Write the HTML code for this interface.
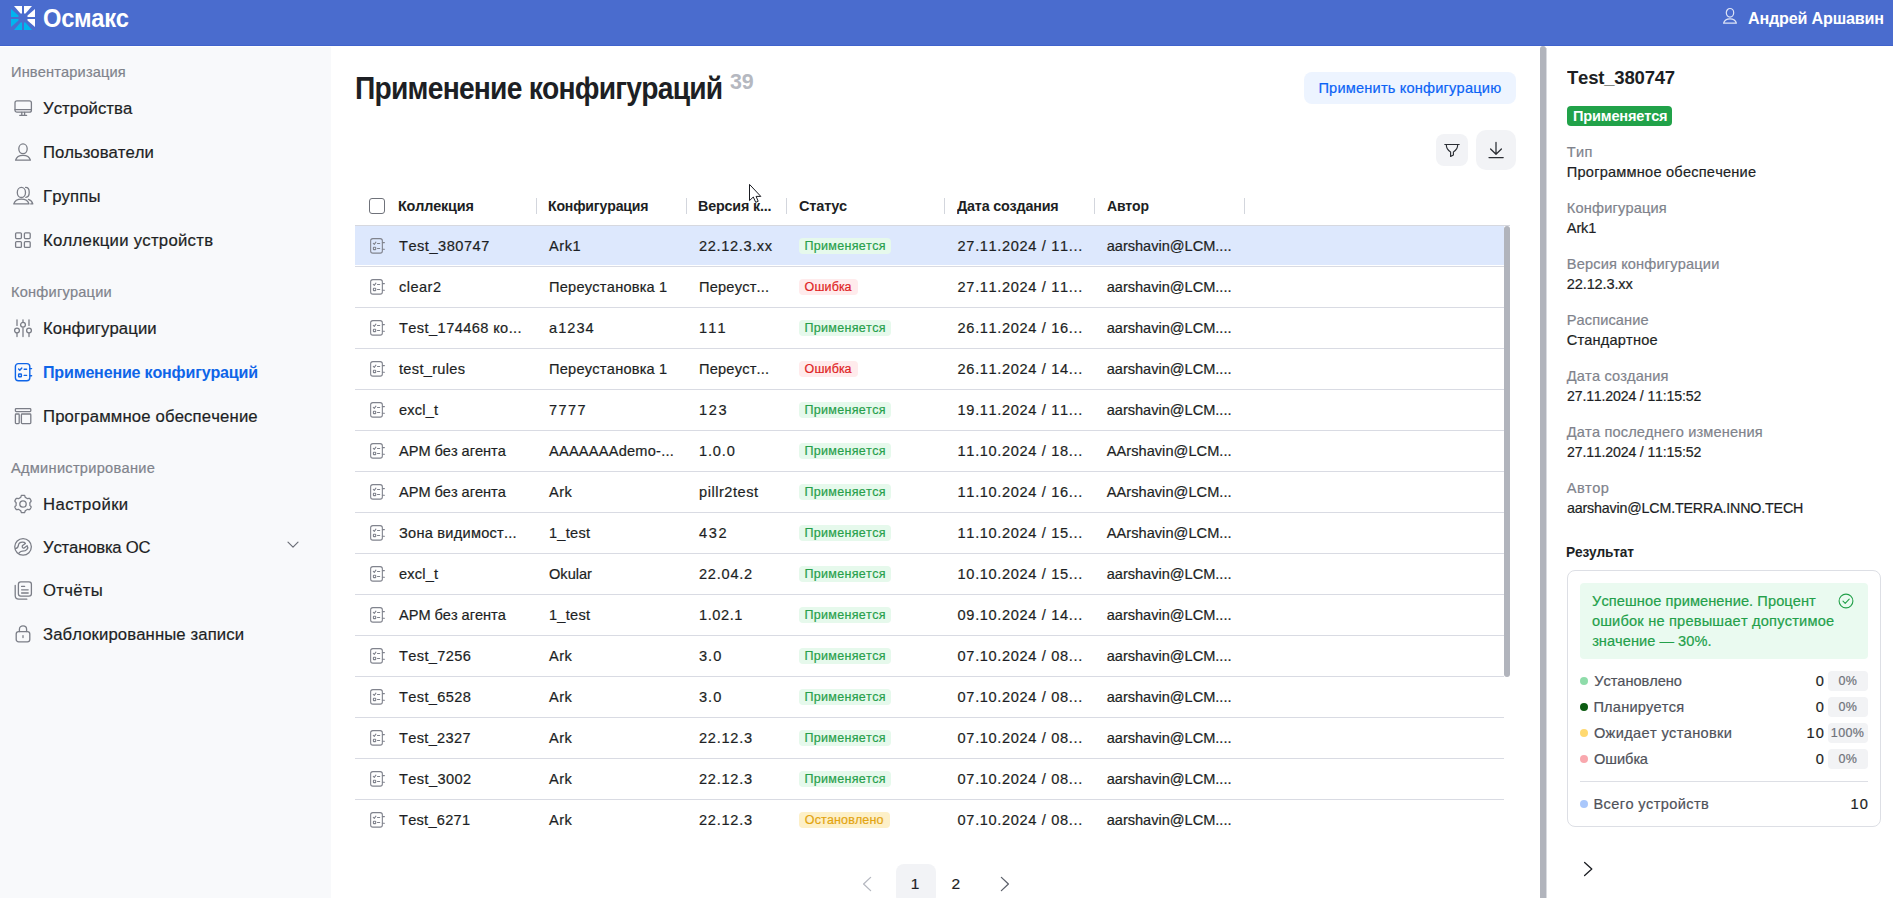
<!DOCTYPE html>
<html lang="ru"><head><meta charset="utf-8"><title>Осмакс — Применение конфигураций</title>
<style>
html,body{margin:0;padding:0;}
body{width:1893px;height:898px;position:relative;overflow:hidden;background:#fff;font-family:'Liberation Sans', sans-serif;font-kerning:none;}
.b{position:absolute;}
.t{position:absolute;white-space:pre;line-height:1;transform-origin:0 0;-webkit-text-stroke:0.2px;}
.t.b{font-weight:700;-webkit-text-stroke:0;}
svg{position:absolute;overflow:visible;}
</style></head><body>
<div class="b" style="left:0px;top:0px;width:1893px;height:46px;background:#4a6cce;"></div>
<div class="b" style="left:0px;top:45px;width:1893px;height:1px;background:#4063cc;"></div>
<div class="b" style="left:0px;top:47px;width:331px;height:851px;background:#f8f9fb;"></div>
<div class="b" style="left:1540px;top:46px;width:6px;height:852px;background:#b1b4bc;border-radius:3px 3px 0 0px;"></div>
<div class="b" style="left:1546px;top:48px;width:1px;height:850px;background:#d9dbe0;"></div>
<svg style="left:11px;top:6px" width="24" height="24" viewBox="0 0 24 24">
<g fill="#fff"><path d="M3 0H11V7.5H9.5Z"/><path d="M13 0H21L14.5 7.5H13Z"/><path d="M24 3V10.9H16.5V9.4Z"/><path d="M24 21V13.1H16.5V14.6Z"/></g>
<g fill="#00b4ef"><path d="M13 24V16.5H14.5L21 24Z"/><path d="M11 24V16.5H9.5L3 24Z"/><path d="M0 21V13.1H7.5V14.6Z"/><path d="M0 3V10.9H7.5V9.4Z"/></g></svg>
<svg style="left:13px;top:98px" width="20" height="20" viewBox="0 0 20 20" fill="none" stroke="#7b7e87" stroke-width="1.3" stroke-linecap="round" stroke-linejoin="round"><rect x="2" y="2.8" width="16.4" height="11.4" rx="2"/><path d="M2 11.6H18.4M8.8 14.4V17.3M11.6 14.4V17.3M6.8 17.4H13.6"/></svg>
<svg style="left:13px;top:142px" width="20" height="20" viewBox="0 0 20 20" fill="none" stroke="#7b7e87" stroke-width="1.3" stroke-linecap="round" stroke-linejoin="round"><ellipse cx="10" cy="6.8" rx="4.2" ry="4.9"/><path d="M2.6 18.2C3.6 14.6 6 13.4 10 13.4S16.4 14.6 17.4 18.2Z"/></svg>
<svg style="left:13px;top:186px" width="20" height="20" viewBox="0 0 20 20" fill="none" stroke="#7b7e87" stroke-width="1.3" stroke-linecap="round" stroke-linejoin="round"><ellipse cx="8.4" cy="6.4" rx="4.1" ry="5.1"/><path d="M0.8 17.9C1.8 14.4 4.4 13.1 8.4 13.1S15 14.4 16 17.9Z"/><path d="M12.6 1.4C17.4 1.4 17.4 11 12.8 11.3M15.4 13.4C17.8 14 19.2 15.6 19.8 17.9H17.8"/></svg>
<svg style="left:13px;top:230px" width="20" height="20" viewBox="0 0 20 20" fill="none" stroke="#7b7e87" stroke-width="1.3" stroke-linecap="round" stroke-linejoin="round"><rect x="2.6" y="2.8" width="5.8" height="5.8" rx="1"/><rect x="11.4" y="2.8" width="5.8" height="5.8" rx="1"/><rect x="2.6" y="11.6" width="5.8" height="5.8" rx="1"/><rect x="11.4" y="11.6" width="5.8" height="5.8" rx="1"/></svg>
<svg style="left:13px;top:318px" width="20" height="20" viewBox="0 0 20 20" fill="none" stroke="#7b7e87" stroke-width="1.3" stroke-linecap="round" stroke-linejoin="round"><path d="M4 1.8V7.4M4 15.6V18.6M10 1.8V3.6M10 9.8V18.6M16 1.8V7.4M16 15.6V18.6"/><circle cx="4" cy="12.6" r="2.4"/><circle cx="10" cy="6.8" r="2.4"/><circle cx="16" cy="12.6" r="2.4"/></svg>
<svg style="left:13px;top:362px" width="20" height="20" viewBox="0 0 20 20" fill="none" stroke="#0f65e8" stroke-width="1.4" stroke-linecap="round" stroke-linejoin="round"><rect x="2.4" y="1.6" width="14.4" height="17.2" rx="3"/><path d="M16.8 6.6H18.6M16.8 13.8H18.6"/><path d="M5.6 7L6.8 8.2L8.8 6M11.2 7.2H13.6M11.2 13.4H13.6"/><rect x="5.6" y="12" width="2.8" height="2.8" rx="0.5"/></svg>
<svg style="left:13px;top:406px" width="20" height="20" viewBox="0 0 20 20" fill="none" stroke="#7b7e87" stroke-width="1.3" stroke-linecap="round" stroke-linejoin="round"><rect x="2.4" y="2.6" width="15.4" height="3" rx="0.8"/><rect x="2.4" y="8" width="3.8" height="9.6" rx="0.8"/><rect x="8.4" y="8" width="9.4" height="9.6" rx="0.8"/></svg>
<svg style="left:13px;top:494px" width="20" height="20" viewBox="0 0 20 20" fill="none" stroke="#7b7e87" stroke-width="1.3" stroke-linecap="round" stroke-linejoin="round"><path d="M10.00 1.30L10.38 1.31L10.76 1.33L11.14 1.37L11.51 1.43L11.80 1.88L12.02 2.47L12.19 3.05L12.36 3.52L12.64 3.63L12.92 3.75L13.19 3.88L13.45 4.02L13.71 4.18L13.96 4.35L14.20 4.53L14.44 4.71L14.92 4.63L15.52 4.48L16.13 4.38L16.66 4.41L16.90 4.70L17.13 5.01L17.34 5.33L17.53 5.65L17.72 5.98L17.88 6.32L18.04 6.67L18.18 7.02L17.93 7.50L17.53 7.98L17.11 8.42L16.80 8.80L16.84 9.10L16.87 9.40L16.89 9.70L16.90 10.00L16.89 10.30L16.87 10.60L16.84 10.90L16.80 11.20L17.11 11.58L17.53 12.02L17.93 12.50L18.18 12.98L18.04 13.33L17.88 13.68L17.72 14.02L17.53 14.35L17.34 14.67L17.13 14.99L16.90 15.30L16.66 15.59L16.13 15.62L15.52 15.52L14.92 15.37L14.44 15.29L14.20 15.47L13.96 15.65L13.71 15.82L13.45 15.98L13.19 16.12L12.92 16.25L12.64 16.37L12.36 16.48L12.19 16.95L12.02 17.53L11.80 18.12L11.51 18.57L11.14 18.63L10.76 18.67L10.38 18.69L10.00 18.70L9.62 18.69L9.24 18.67L8.86 18.63L8.49 18.57L8.20 18.12L7.98 17.53L7.81 16.95L7.64 16.48L7.36 16.37L7.08 16.25L6.81 16.12L6.55 15.98L6.29 15.82L6.04 15.65L5.80 15.47L5.56 15.29L5.08 15.37L4.48 15.52L3.87 15.62L3.34 15.59L3.10 15.30L2.87 14.99L2.66 14.67L2.47 14.35L2.28 14.02L2.12 13.68L1.96 13.33L1.82 12.98L2.07 12.50L2.47 12.02L2.89 11.58L3.20 11.20L3.16 10.90L3.13 10.60L3.11 10.30L3.10 10.00L3.11 9.70L3.13 9.40L3.16 9.10L3.20 8.80L2.89 8.42L2.47 7.98L2.07 7.50L1.82 7.02L1.96 6.67L2.12 6.32L2.28 5.98L2.47 5.65L2.66 5.33L2.87 5.01L3.10 4.70L3.34 4.41L3.87 4.38L4.48 4.48L5.08 4.63L5.56 4.71L5.80 4.53L6.04 4.35L6.29 4.18L6.55 4.02L6.81 3.88L7.08 3.75L7.36 3.63L7.64 3.52L7.81 3.05L7.98 2.47L8.20 1.88L8.49 1.43L8.86 1.37L9.24 1.33L9.62 1.31L10.00 1.30Z"/><circle cx="10" cy="10" r="3.2"/></svg>
<svg style="left:13px;top:537px" width="20" height="20" viewBox="0 0 20 20" fill="none" stroke="#7b7e87" stroke-width="1.3" stroke-linecap="round" stroke-linejoin="round"><circle cx="10.05" cy="9.85" r="8.3"/><path d="M2.5 11.6C4 11.2 5.2 10.2 5.4 8.4C5.6 6.6 7 5.4 9.4 5.2C10.8 5.1 11.8 5.6 12.4 6.4L9.6 8.5C9 9.2 9.2 10.4 9.8 10.8C10.4 11.3 11 11.2 11.4 10.8L14.1 8.7C14.9 9.8 14.8 11.4 14 12.4C13 13.8 11.2 14.2 9.4 14.2C8 14.2 7 15 6.2 15.8"/></svg>
<svg style="left:13px;top:580px" width="20" height="20" viewBox="0 0 20 20" fill="none" stroke="#7b7e87" stroke-width="1.3" stroke-linecap="round" stroke-linejoin="round"><rect x="5.4" y="1.8" width="13" height="14.4" rx="2.4"/><path d="M8.6 6.4H11.6M8.6 9.8H15.2M8.6 13H15.2"/><path d="M2.2 5.4V15.6C2.2 17.8 3.6 19.2 5.8 19.2H13.8"/></svg>
<svg style="left:13px;top:624px" width="20" height="20" viewBox="0 0 20 20" fill="none" stroke="#7b7e87" stroke-width="1.3" stroke-linecap="round" stroke-linejoin="round"><rect x="3.2" y="7.6" width="13.6" height="10.2" rx="2.4"/><path d="M6.4 7.6V5.4C6.4 0.8 13.6 0.8 13.6 5.4V7.6M10 11.6V13.6"/></svg>
<svg style="left:286px;top:538px" width="14" height="14" viewBox="0 0 14 14" fill="none" stroke="#6b6e77" stroke-width="1.2" stroke-linecap="round" stroke-linejoin="round"><path d="M2 4.2L7 9.2L12 4.2"/></svg>
<div class="b" style="left:1304px;top:72px;width:212px;height:32px;background:#edf4ff;border-radius:8px;"></div>
<div class="b" style="left:1436px;top:134px;width:32px;height:32px;background:#f2f3f6;border-radius:8px;"></div>
<div class="b" style="left:1476px;top:130px;width:40px;height:40px;background:#f2f3f6;border-radius:10px;"></div>
<svg style="left:1442px;top:140px" width="20" height="20" viewBox="0 0 20 20" fill="none" stroke="#2a2d33" stroke-width="1.15" stroke-linecap="round" stroke-linejoin="round"><path d="M2.8 4.5H17.2M4.3 4.6C4.3 8.8 6.4 10.8 8.6 11.9V16.5L11.4 15V11.9C13.6 10.8 15.7 8.8 15.7 4.6"/></svg>
<svg style="left:1486px;top:140px" width="20" height="20" viewBox="0 0 20 20" fill="none" stroke="#2a2d33" stroke-width="1.25" stroke-linecap="round" stroke-linejoin="round"><path d="M10 2.4V14M4.6 9L10 14.3L15.4 9M3 17.5H17.2"/></svg>
<div class="b" style="left:369px;top:198px;width:16px;height:16px;background:#fff;border-radius:3px;border:1px solid #6f727a;box-sizing:border-box;"></div>
<div class="b" style="left:536px;top:198px;width:1px;height:16px;background:#d3d6dd;"></div>
<div class="b" style="left:686px;top:198px;width:1px;height:16px;background:#d3d6dd;"></div>
<div class="b" style="left:786px;top:198px;width:1px;height:16px;background:#d3d6dd;"></div>
<div class="b" style="left:944px;top:198px;width:1px;height:16px;background:#d3d6dd;"></div>
<div class="b" style="left:1094px;top:198px;width:1px;height:16px;background:#d3d6dd;"></div>
<div class="b" style="left:1244px;top:198px;width:1px;height:16px;background:#d3d6dd;"></div>
<div class="b" style="left:355px;top:225px;width:1155px;height:1px;background:#d6d8df;"></div>
<div class="b" style="left:355px;top:226px;width:1149px;height:39px;background:#dde8fd;"></div>
<div class="b" style="left:355px;top:266px;width:1149px;height:1px;background:#d9dbe3;"></div>
<div class="b" style="left:355px;top:307px;width:1149px;height:1px;background:#d9dbe3;"></div>
<div class="b" style="left:355px;top:348px;width:1149px;height:1px;background:#d9dbe3;"></div>
<div class="b" style="left:355px;top:389px;width:1149px;height:1px;background:#d9dbe3;"></div>
<div class="b" style="left:355px;top:430px;width:1149px;height:1px;background:#d9dbe3;"></div>
<div class="b" style="left:355px;top:471px;width:1149px;height:1px;background:#d9dbe3;"></div>
<div class="b" style="left:355px;top:512px;width:1149px;height:1px;background:#d9dbe3;"></div>
<div class="b" style="left:355px;top:553px;width:1149px;height:1px;background:#d9dbe3;"></div>
<div class="b" style="left:355px;top:594px;width:1149px;height:1px;background:#d9dbe3;"></div>
<div class="b" style="left:355px;top:635px;width:1149px;height:1px;background:#d9dbe3;"></div>
<div class="b" style="left:355px;top:676px;width:1149px;height:1px;background:#d9dbe3;"></div>
<div class="b" style="left:355px;top:717px;width:1149px;height:1px;background:#d9dbe3;"></div>
<div class="b" style="left:355px;top:758px;width:1149px;height:1px;background:#d9dbe3;"></div>
<div class="b" style="left:355px;top:799px;width:1149px;height:1px;background:#d9dbe3;"></div>
<div class="b" style="left:1504px;top:226px;width:6px;height:451px;background:#b1b4bc;border-radius:3px;"></div>
<svg style="left:369px;top:238px" width="16" height="16" viewBox="0 0 16 16" fill="none" stroke="#80838d" stroke-width="1.1" stroke-linecap="round" stroke-linejoin="round"><rect x="1.65" y="0.65" width="11.7" height="14.5" rx="2.2"/><path d="M13.4 4.6H15.4M13.4 11.3H15.4"/><path d="M4.3 5.3L5.3 6.3L6.9 4.2M8.5 5.5H10.7M8.5 10.5H10.7"/><rect x="4.4" y="9.3" width="2.3" height="2.3" rx="0.4"/></svg>
<div class="b" style="left:799px;top:238px;width:92px;height:16px;background:#e6f9ec;border-radius:4px;"></div>
<svg style="left:369px;top:279px" width="16" height="16" viewBox="0 0 16 16" fill="none" stroke="#80838d" stroke-width="1.1" stroke-linecap="round" stroke-linejoin="round"><rect x="1.65" y="0.65" width="11.7" height="14.5" rx="2.2"/><path d="M13.4 4.6H15.4M13.4 11.3H15.4"/><path d="M4.3 5.3L5.3 6.3L6.9 4.2M8.5 5.5H10.7M8.5 10.5H10.7"/><rect x="4.4" y="9.3" width="2.3" height="2.3" rx="0.4"/></svg>
<div class="b" style="left:799px;top:279px;width:59px;height:16px;background:#ffebec;border-radius:4px;"></div>
<svg style="left:369px;top:320px" width="16" height="16" viewBox="0 0 16 16" fill="none" stroke="#80838d" stroke-width="1.1" stroke-linecap="round" stroke-linejoin="round"><rect x="1.65" y="0.65" width="11.7" height="14.5" rx="2.2"/><path d="M13.4 4.6H15.4M13.4 11.3H15.4"/><path d="M4.3 5.3L5.3 6.3L6.9 4.2M8.5 5.5H10.7M8.5 10.5H10.7"/><rect x="4.4" y="9.3" width="2.3" height="2.3" rx="0.4"/></svg>
<div class="b" style="left:799px;top:320px;width:92px;height:16px;background:#e6f9ec;border-radius:4px;"></div>
<svg style="left:369px;top:361px" width="16" height="16" viewBox="0 0 16 16" fill="none" stroke="#80838d" stroke-width="1.1" stroke-linecap="round" stroke-linejoin="round"><rect x="1.65" y="0.65" width="11.7" height="14.5" rx="2.2"/><path d="M13.4 4.6H15.4M13.4 11.3H15.4"/><path d="M4.3 5.3L5.3 6.3L6.9 4.2M8.5 5.5H10.7M8.5 10.5H10.7"/><rect x="4.4" y="9.3" width="2.3" height="2.3" rx="0.4"/></svg>
<div class="b" style="left:799px;top:361px;width:59px;height:16px;background:#ffebec;border-radius:4px;"></div>
<svg style="left:369px;top:402px" width="16" height="16" viewBox="0 0 16 16" fill="none" stroke="#80838d" stroke-width="1.1" stroke-linecap="round" stroke-linejoin="round"><rect x="1.65" y="0.65" width="11.7" height="14.5" rx="2.2"/><path d="M13.4 4.6H15.4M13.4 11.3H15.4"/><path d="M4.3 5.3L5.3 6.3L6.9 4.2M8.5 5.5H10.7M8.5 10.5H10.7"/><rect x="4.4" y="9.3" width="2.3" height="2.3" rx="0.4"/></svg>
<div class="b" style="left:799px;top:402px;width:92px;height:16px;background:#e6f9ec;border-radius:4px;"></div>
<svg style="left:369px;top:443px" width="16" height="16" viewBox="0 0 16 16" fill="none" stroke="#80838d" stroke-width="1.1" stroke-linecap="round" stroke-linejoin="round"><rect x="1.65" y="0.65" width="11.7" height="14.5" rx="2.2"/><path d="M13.4 4.6H15.4M13.4 11.3H15.4"/><path d="M4.3 5.3L5.3 6.3L6.9 4.2M8.5 5.5H10.7M8.5 10.5H10.7"/><rect x="4.4" y="9.3" width="2.3" height="2.3" rx="0.4"/></svg>
<div class="b" style="left:799px;top:443px;width:92px;height:16px;background:#e6f9ec;border-radius:4px;"></div>
<svg style="left:369px;top:484px" width="16" height="16" viewBox="0 0 16 16" fill="none" stroke="#80838d" stroke-width="1.1" stroke-linecap="round" stroke-linejoin="round"><rect x="1.65" y="0.65" width="11.7" height="14.5" rx="2.2"/><path d="M13.4 4.6H15.4M13.4 11.3H15.4"/><path d="M4.3 5.3L5.3 6.3L6.9 4.2M8.5 5.5H10.7M8.5 10.5H10.7"/><rect x="4.4" y="9.3" width="2.3" height="2.3" rx="0.4"/></svg>
<div class="b" style="left:799px;top:484px;width:92px;height:16px;background:#e6f9ec;border-radius:4px;"></div>
<svg style="left:369px;top:525px" width="16" height="16" viewBox="0 0 16 16" fill="none" stroke="#80838d" stroke-width="1.1" stroke-linecap="round" stroke-linejoin="round"><rect x="1.65" y="0.65" width="11.7" height="14.5" rx="2.2"/><path d="M13.4 4.6H15.4M13.4 11.3H15.4"/><path d="M4.3 5.3L5.3 6.3L6.9 4.2M8.5 5.5H10.7M8.5 10.5H10.7"/><rect x="4.4" y="9.3" width="2.3" height="2.3" rx="0.4"/></svg>
<div class="b" style="left:799px;top:525px;width:92px;height:16px;background:#e6f9ec;border-radius:4px;"></div>
<svg style="left:369px;top:566px" width="16" height="16" viewBox="0 0 16 16" fill="none" stroke="#80838d" stroke-width="1.1" stroke-linecap="round" stroke-linejoin="round"><rect x="1.65" y="0.65" width="11.7" height="14.5" rx="2.2"/><path d="M13.4 4.6H15.4M13.4 11.3H15.4"/><path d="M4.3 5.3L5.3 6.3L6.9 4.2M8.5 5.5H10.7M8.5 10.5H10.7"/><rect x="4.4" y="9.3" width="2.3" height="2.3" rx="0.4"/></svg>
<div class="b" style="left:799px;top:566px;width:92px;height:16px;background:#e6f9ec;border-radius:4px;"></div>
<svg style="left:369px;top:607px" width="16" height="16" viewBox="0 0 16 16" fill="none" stroke="#80838d" stroke-width="1.1" stroke-linecap="round" stroke-linejoin="round"><rect x="1.65" y="0.65" width="11.7" height="14.5" rx="2.2"/><path d="M13.4 4.6H15.4M13.4 11.3H15.4"/><path d="M4.3 5.3L5.3 6.3L6.9 4.2M8.5 5.5H10.7M8.5 10.5H10.7"/><rect x="4.4" y="9.3" width="2.3" height="2.3" rx="0.4"/></svg>
<div class="b" style="left:799px;top:607px;width:92px;height:16px;background:#e6f9ec;border-radius:4px;"></div>
<svg style="left:369px;top:648px" width="16" height="16" viewBox="0 0 16 16" fill="none" stroke="#80838d" stroke-width="1.1" stroke-linecap="round" stroke-linejoin="round"><rect x="1.65" y="0.65" width="11.7" height="14.5" rx="2.2"/><path d="M13.4 4.6H15.4M13.4 11.3H15.4"/><path d="M4.3 5.3L5.3 6.3L6.9 4.2M8.5 5.5H10.7M8.5 10.5H10.7"/><rect x="4.4" y="9.3" width="2.3" height="2.3" rx="0.4"/></svg>
<div class="b" style="left:799px;top:648px;width:92px;height:16px;background:#e6f9ec;border-radius:4px;"></div>
<svg style="left:369px;top:689px" width="16" height="16" viewBox="0 0 16 16" fill="none" stroke="#80838d" stroke-width="1.1" stroke-linecap="round" stroke-linejoin="round"><rect x="1.65" y="0.65" width="11.7" height="14.5" rx="2.2"/><path d="M13.4 4.6H15.4M13.4 11.3H15.4"/><path d="M4.3 5.3L5.3 6.3L6.9 4.2M8.5 5.5H10.7M8.5 10.5H10.7"/><rect x="4.4" y="9.3" width="2.3" height="2.3" rx="0.4"/></svg>
<div class="b" style="left:799px;top:689px;width:92px;height:16px;background:#e6f9ec;border-radius:4px;"></div>
<svg style="left:369px;top:730px" width="16" height="16" viewBox="0 0 16 16" fill="none" stroke="#80838d" stroke-width="1.1" stroke-linecap="round" stroke-linejoin="round"><rect x="1.65" y="0.65" width="11.7" height="14.5" rx="2.2"/><path d="M13.4 4.6H15.4M13.4 11.3H15.4"/><path d="M4.3 5.3L5.3 6.3L6.9 4.2M8.5 5.5H10.7M8.5 10.5H10.7"/><rect x="4.4" y="9.3" width="2.3" height="2.3" rx="0.4"/></svg>
<div class="b" style="left:799px;top:730px;width:92px;height:16px;background:#e6f9ec;border-radius:4px;"></div>
<svg style="left:369px;top:771px" width="16" height="16" viewBox="0 0 16 16" fill="none" stroke="#80838d" stroke-width="1.1" stroke-linecap="round" stroke-linejoin="round"><rect x="1.65" y="0.65" width="11.7" height="14.5" rx="2.2"/><path d="M13.4 4.6H15.4M13.4 11.3H15.4"/><path d="M4.3 5.3L5.3 6.3L6.9 4.2M8.5 5.5H10.7M8.5 10.5H10.7"/><rect x="4.4" y="9.3" width="2.3" height="2.3" rx="0.4"/></svg>
<div class="b" style="left:799px;top:771px;width:92px;height:16px;background:#e6f9ec;border-radius:4px;"></div>
<svg style="left:369px;top:812px" width="16" height="16" viewBox="0 0 16 16" fill="none" stroke="#80838d" stroke-width="1.1" stroke-linecap="round" stroke-linejoin="round"><rect x="1.65" y="0.65" width="11.7" height="14.5" rx="2.2"/><path d="M13.4 4.6H15.4M13.4 11.3H15.4"/><path d="M4.3 5.3L5.3 6.3L6.9 4.2M8.5 5.5H10.7M8.5 10.5H10.7"/><rect x="4.4" y="9.3" width="2.3" height="2.3" rx="0.4"/></svg>
<div class="b" style="left:799px;top:812px;width:91px;height:16px;background:#fdf0c8;border-radius:4px;"></div>
<div class="b" style="left:896px;top:864px;width:40px;height:40px;background:#f2f3f6;border-radius:8px;"></div>
<svg style="left:860px;top:876px" width="16" height="16" viewBox="0 0 16 16" fill="none" stroke="#b5b8c0" stroke-width="1.3" stroke-linecap="round" stroke-linejoin="round"><path d="M10.6 1.4L3.6 8L10.6 14.6"/></svg>
<svg style="left:997px;top:876px" width="16" height="16" viewBox="0 0 16 16" fill="none" stroke="#5d616b" stroke-width="1.3" stroke-linecap="round" stroke-linejoin="round"><path d="M4.4 1.4L11.4 8L4.4 14.6"/></svg>
<svg style="left:748px;top:183px" width="16" height="24" viewBox="0 0 16 24"><path d="M1.5 1.4V17.6L5.3 14L7.7 19.3L10.2 18.3L8.1 13.4H12.8Z" fill="#fff" stroke="#1a1c22" stroke-width="1" stroke-linejoin="miter"/></svg>
<div class="b" style="left:1567px;top:106px;width:105px;height:20px;background:#21a249;border-radius:4px;"></div>
<div class="b" style="left:1567px;top:570px;width:314px;height:257px;background:#fff;border-radius:8px;border:1px solid #dddfe5;box-sizing:border-box;"></div>
<div class="b" style="left:1580px;top:583px;width:288px;height:76px;background:#eafaf0;border-radius:4px;"></div>
<svg style="left:1838px;top:592.6px" width="16" height="16" viewBox="0 0 16 16" fill="none" stroke="#23a04a" stroke-width="1.1" stroke-linecap="round" stroke-linejoin="round"><circle cx="8" cy="8" r="6.9"/><path d="M5 8.2L7.2 10.4L11.2 6.2"/></svg>
<div class="b" style="left:1580px;top:677px;width:8px;height:8px;background:#8fdcaa;border-radius:4px;"></div>
<div class="b" style="left:1828px;top:671px;width:40px;height:20px;background:#f2f3f5;border-radius:4px;"></div>
<div class="b" style="left:1580px;top:703px;width:8px;height:8px;background:#0c5c12;border-radius:4px;"></div>
<div class="b" style="left:1828px;top:697px;width:40px;height:20px;background:#f2f3f5;border-radius:4px;"></div>
<div class="b" style="left:1580px;top:729px;width:8px;height:8px;background:#ffd970;border-radius:4px;"></div>
<div class="b" style="left:1828px;top:723px;width:40px;height:20px;background:#f2f3f5;border-radius:4px;"></div>
<div class="b" style="left:1580px;top:755px;width:8px;height:8px;background:#f9a8ae;border-radius:4px;"></div>
<div class="b" style="left:1828px;top:749px;width:40px;height:20px;background:#f2f3f5;border-radius:4px;"></div>
<div class="b" style="left:1580px;top:781px;width:288px;height:1px;background:#dddfe5;"></div>
<div class="b" style="left:1580px;top:800px;width:8px;height:8px;background:#a9c7fb;border-radius:4px;"></div>
<svg style="left:1580px;top:861px" width="16" height="16" viewBox="0 0 16 16" fill="none" stroke="#1d1f24" stroke-width="1.3" stroke-linecap="round" stroke-linejoin="round"><path d="M4.6 1.4L11.8 8L4.6 14.6"/></svg>
<svg style="left:1722px;top:7px" width="16" height="18" viewBox="0 0 16 18" fill="none" stroke="rgba(255,255,255,0.82)" stroke-width="1.2" stroke-linecap="round" stroke-linejoin="round"><ellipse cx="8" cy="5.8" rx="3.7" ry="4.3"/><path d="M1.6 16.2C2.4 12.8 4.6 11.8 8 11.8S13.6 12.8 14.4 16.2Z"/></svg>
<span class="t b" style="top:6px;font-size:25.1px;color:#fff;letter-spacing:-0.3px;transform:scaleX(0.9455);left:42.63px;">Осмакс</span>
<span class="t b" style="top:11px;font-size:16.7px;color:#fff;letter-spacing:-0.2px;transform:scaleX(0.9680);left:1747.50px;">Андрей Аршавин</span>
<span class="t" style="top:65px;font-size:14.6px;color:#80838c;letter-spacing:0.15px;left:11.00px;">Инвентаризация</span>
<span class="t" style="top:285px;font-size:14.6px;color:#80838c;letter-spacing:0.21px;left:11.00px;">Конфигурации</span>
<span class="t" style="top:461px;font-size:14.6px;color:#80838c;letter-spacing:0.28px;left:11.00px;">Администрирование</span>
<span class="t" style="top:101px;font-size:16.7px;color:#1d1f24;letter-spacing:0.08px;left:43.00px;">Устройства</span>
<span class="t" style="top:145px;font-size:16.7px;color:#1d1f24;left:43.00px;">Пользователи</span>
<span class="t" style="top:189px;font-size:16.7px;color:#1d1f24;letter-spacing:0.14px;left:43.00px;">Группы</span>
<span class="t" style="top:233px;font-size:16.7px;color:#1d1f24;letter-spacing:0.28px;left:43.00px;">Коллекции устройств</span>
<span class="t" style="top:321px;font-size:16.7px;color:#1d1f24;letter-spacing:0.11px;left:43.00px;">Конфигурации</span>
<span class="t b" style="top:365px;font-size:16.7px;color:#0f65e8;letter-spacing:-0.2px;transform:scaleX(0.9633);left:43.00px;">Применение конфигураций</span>
<span class="t" style="top:409px;font-size:16.7px;color:#1d1f24;letter-spacing:0.16px;left:43.00px;">Программное обеспечение</span>
<span class="t" style="top:497px;font-size:16.7px;color:#1d1f24;letter-spacing:0.42px;left:43.00px;">Настройки</span>
<span class="t" style="top:540px;font-size:16.7px;color:#1d1f24;letter-spacing:-0.17px;left:43.00px;">Установка ОС</span>
<span class="t" style="top:583px;font-size:16.7px;color:#1d1f24;letter-spacing:0.3px;left:43.00px;">Отчёты</span>
<span class="t" style="top:627px;font-size:16.7px;color:#1d1f24;letter-spacing:0.12px;left:43.00px;">Заблокированные записи</span>
<span class="t b" style="top:73px;font-size:31.3px;color:#1d1f24;letter-spacing:-0.85px;transform:scaleX(0.9019);left:354.81px;">Применение конфигураций</span>
<span class="t b" style="top:71px;font-size:21.9px;color:#b5b8c0;letter-spacing:-0.26px;transform:scaleX(0.9789);left:730.41px;">39</span>
<span class="t" style="top:81px;font-size:14.6px;color:#0b63f6;letter-spacing:0.2px;left:1318.42px;">Применить конфигурацию</span>
<span class="t b" style="top:199px;font-size:14.6px;color:#1d1f24;letter-spacing:-0.18px;transform:scaleX(0.9869);left:398.24px;">Коллекция</span>
<span class="t b" style="top:199px;font-size:14.6px;color:#1d1f24;letter-spacing:-0.18px;transform:scaleX(0.9659);left:548.26px;">Конфигурация</span>
<span class="t b" style="top:199px;font-size:14.6px;color:#1d1f24;letter-spacing:-0.18px;transform:scaleX(0.9809);left:698.24px;">Версия к...</span>
<span class="t b" style="top:199px;font-size:14.6px;color:#1d1f24;letter-spacing:-0.18px;transform:scaleX(0.9979);left:798.60px;">Статус</span>
<span class="t b" style="top:199px;font-size:14.6px;color:#1d1f24;letter-spacing:-0.18px;transform:scaleX(0.9816);left:956.77px;">Дата создания</span>
<span class="t b" style="top:199px;font-size:14.6px;color:#1d1f24;letter-spacing:-0.18px;transform:scaleX(0.9593);left:1106.75px;">Автор</span>
<span class="t" style="top:239px;font-size:14.6px;color:#1d1f24;letter-spacing:0.51px;left:399.00px;">Test_380747</span>
<span class="t" style="top:239px;font-size:14.6px;color:#1d1f24;letter-spacing:0.53px;left:549.00px;">Ark1</span>
<span class="t" style="top:239px;font-size:14.6px;color:#1d1f24;letter-spacing:0.64px;left:699.00px;">22.12.3.xx</span>
<span class="t" style="top:240px;font-size:12.5px;color:#27a04b;letter-spacing:0.33px;left:804.39px;">Применяется</span>
<span class="t" style="top:239px;font-size:14.6px;color:#1d1f24;letter-spacing:0.65px;left:957.60px;">27.11.2024 / 11...</span>
<span class="t" style="top:239px;font-size:14.6px;color:#1d1f24;letter-spacing:-0.02px;left:1106.70px;">aarshavin@LCM....</span>
<span class="t" style="top:280px;font-size:14.6px;color:#1d1f24;letter-spacing:0.45px;left:399.00px;">clear2</span>
<span class="t" style="top:280px;font-size:14.6px;color:#1d1f24;letter-spacing:0.24px;left:549.00px;">Переустановка 1</span>
<span class="t" style="top:280px;font-size:14.6px;color:#1d1f24;letter-spacing:0.21px;left:699.00px;">Переуст...</span>
<span class="t" style="top:281px;font-size:12.5px;color:#e02424;letter-spacing:0.12px;left:804.61px;">Ошибка</span>
<span class="t" style="top:280px;font-size:14.6px;color:#1d1f24;letter-spacing:0.65px;left:957.60px;">27.11.2024 / 11...</span>
<span class="t" style="top:280px;font-size:14.6px;color:#1d1f24;letter-spacing:-0.02px;left:1106.70px;">aarshavin@LCM....</span>
<span class="t" style="top:321px;font-size:14.6px;color:#1d1f24;letter-spacing:0.42px;left:399.00px;">Test_174468 ко...</span>
<span class="t" style="top:321px;font-size:14.6px;color:#1d1f24;letter-spacing:1.01px;left:549.00px;">a1234</span>
<span class="t" style="top:321px;font-size:14.6px;color:#1d1f24;letter-spacing:1.13px;left:699.00px;">111</span>
<span class="t" style="top:322px;font-size:12.5px;color:#27a04b;letter-spacing:0.33px;left:804.39px;">Применяется</span>
<span class="t" style="top:321px;font-size:14.6px;color:#1d1f24;letter-spacing:0.65px;left:957.60px;">26.11.2024 / 16...</span>
<span class="t" style="top:321px;font-size:14.6px;color:#1d1f24;letter-spacing:-0.02px;left:1106.70px;">aarshavin@LCM....</span>
<span class="t" style="top:362px;font-size:14.6px;color:#1d1f24;letter-spacing:0.31px;left:399.00px;">test_rules</span>
<span class="t" style="top:362px;font-size:14.6px;color:#1d1f24;letter-spacing:0.24px;left:549.00px;">Переустановка 1</span>
<span class="t" style="top:362px;font-size:14.6px;color:#1d1f24;letter-spacing:0.21px;left:699.00px;">Переуст...</span>
<span class="t" style="top:363px;font-size:12.5px;color:#e02424;letter-spacing:0.12px;left:804.61px;">Ошибка</span>
<span class="t" style="top:362px;font-size:14.6px;color:#1d1f24;letter-spacing:0.65px;left:957.60px;">26.11.2024 / 14...</span>
<span class="t" style="top:362px;font-size:14.6px;color:#1d1f24;letter-spacing:-0.02px;left:1106.70px;">aarshavin@LCM....</span>
<span class="t" style="top:403px;font-size:14.6px;color:#1d1f24;letter-spacing:0.17px;left:399.00px;">excl_t</span>
<span class="t" style="top:403px;font-size:14.6px;color:#1d1f24;letter-spacing:1.38px;left:549.00px;">7777</span>
<span class="t" style="top:403px;font-size:14.6px;color:#1d1f24;letter-spacing:1.64px;left:699.00px;">123</span>
<span class="t" style="top:404px;font-size:12.5px;color:#27a04b;letter-spacing:0.33px;left:804.39px;">Применяется</span>
<span class="t" style="top:403px;font-size:14.6px;color:#1d1f24;letter-spacing:0.65px;left:957.60px;">19.11.2024 / 11...</span>
<span class="t" style="top:403px;font-size:14.6px;color:#1d1f24;letter-spacing:-0.02px;left:1106.70px;">aarshavin@LCM....</span>
<span class="t" style="top:444px;font-size:14.6px;color:#1d1f24;letter-spacing:-0.04px;left:399.00px;">АРМ без агента</span>
<span class="t" style="top:444px;font-size:14.6px;color:#1d1f24;letter-spacing:0.22px;left:549.00px;">AAAAAAAdemo-...</span>
<span class="t" style="top:444px;font-size:14.6px;color:#1d1f24;letter-spacing:0.85px;left:699.00px;">1.0.0</span>
<span class="t" style="top:445px;font-size:12.5px;color:#27a04b;letter-spacing:0.33px;left:804.39px;">Применяется</span>
<span class="t" style="top:444px;font-size:14.6px;color:#1d1f24;letter-spacing:0.65px;left:957.60px;">11.10.2024 / 18...</span>
<span class="t" style="top:444px;font-size:14.6px;color:#1d1f24;letter-spacing:0.04px;left:1106.70px;">AArshavin@LCM...</span>
<span class="t" style="top:485px;font-size:14.6px;color:#1d1f24;letter-spacing:-0.04px;left:399.00px;">АРМ без агента</span>
<span class="t" style="top:485px;font-size:14.6px;color:#1d1f24;letter-spacing:0.44px;left:549.00px;">Ark</span>
<span class="t" style="top:485px;font-size:14.6px;color:#1d1f24;letter-spacing:0.52px;left:699.00px;">pillr2test</span>
<span class="t" style="top:486px;font-size:12.5px;color:#27a04b;letter-spacing:0.33px;left:804.39px;">Применяется</span>
<span class="t" style="top:485px;font-size:14.6px;color:#1d1f24;letter-spacing:0.65px;left:957.60px;">11.10.2024 / 16...</span>
<span class="t" style="top:485px;font-size:14.6px;color:#1d1f24;letter-spacing:0.04px;left:1106.70px;">AArshavin@LCM...</span>
<span class="t" style="top:526px;font-size:14.6px;color:#1d1f24;letter-spacing:0.24px;left:399.00px;">Зона видимост...</span>
<span class="t" style="top:526px;font-size:14.6px;color:#1d1f24;letter-spacing:0.25px;left:549.00px;">1_test</span>
<span class="t" style="top:526px;font-size:14.6px;color:#1d1f24;letter-spacing:1.64px;left:699.00px;">432</span>
<span class="t" style="top:527px;font-size:12.5px;color:#27a04b;letter-spacing:0.33px;left:804.39px;">Применяется</span>
<span class="t" style="top:526px;font-size:14.6px;color:#1d1f24;letter-spacing:0.65px;left:957.60px;">11.10.2024 / 15...</span>
<span class="t" style="top:526px;font-size:14.6px;color:#1d1f24;letter-spacing:0.04px;left:1106.70px;">AArshavin@LCM...</span>
<span class="t" style="top:567px;font-size:14.6px;color:#1d1f24;letter-spacing:0.17px;left:399.00px;">excl_t</span>
<span class="t" style="top:567px;font-size:14.6px;color:#1d1f24;letter-spacing:-0.01px;left:549.00px;">Okular</span>
<span class="t" style="top:567px;font-size:14.6px;color:#1d1f24;letter-spacing:0.75px;left:699.00px;">22.04.2</span>
<span class="t" style="top:568px;font-size:12.5px;color:#27a04b;letter-spacing:0.33px;left:804.39px;">Применяется</span>
<span class="t" style="top:567px;font-size:14.6px;color:#1d1f24;letter-spacing:0.65px;left:957.60px;">10.10.2024 / 15...</span>
<span class="t" style="top:567px;font-size:14.6px;color:#1d1f24;letter-spacing:-0.02px;left:1106.70px;">aarshavin@LCM....</span>
<span class="t" style="top:608px;font-size:14.6px;color:#1d1f24;letter-spacing:-0.04px;left:399.00px;">АРМ без агента</span>
<span class="t" style="top:608px;font-size:14.6px;color:#1d1f24;letter-spacing:0.25px;left:549.00px;">1_test</span>
<span class="t" style="top:608px;font-size:14.6px;color:#1d1f24;letter-spacing:0.56px;left:699.00px;">1.02.1</span>
<span class="t" style="top:609px;font-size:12.5px;color:#27a04b;letter-spacing:0.33px;left:804.39px;">Применяется</span>
<span class="t" style="top:608px;font-size:14.6px;color:#1d1f24;letter-spacing:0.65px;left:957.60px;">09.10.2024 / 14...</span>
<span class="t" style="top:608px;font-size:14.6px;color:#1d1f24;letter-spacing:-0.02px;left:1106.70px;">aarshavin@LCM....</span>
<span class="t" style="top:649px;font-size:14.6px;color:#1d1f24;letter-spacing:0.37px;left:399.00px;">Test_7256</span>
<span class="t" style="top:649px;font-size:14.6px;color:#1d1f24;letter-spacing:0.44px;left:549.00px;">Ark</span>
<span class="t" style="top:649px;font-size:14.6px;color:#1d1f24;letter-spacing:0.99px;left:699.00px;">3.0</span>
<span class="t" style="top:650px;font-size:12.5px;color:#27a04b;letter-spacing:0.33px;left:804.39px;">Применяется</span>
<span class="t" style="top:649px;font-size:14.6px;color:#1d1f24;letter-spacing:0.65px;left:957.60px;">07.10.2024 / 08...</span>
<span class="t" style="top:649px;font-size:14.6px;color:#1d1f24;letter-spacing:-0.02px;left:1106.70px;">aarshavin@LCM....</span>
<span class="t" style="top:690px;font-size:14.6px;color:#1d1f24;letter-spacing:0.37px;left:399.00px;">Test_6528</span>
<span class="t" style="top:690px;font-size:14.6px;color:#1d1f24;letter-spacing:0.44px;left:549.00px;">Ark</span>
<span class="t" style="top:690px;font-size:14.6px;color:#1d1f24;letter-spacing:0.99px;left:699.00px;">3.0</span>
<span class="t" style="top:691px;font-size:12.5px;color:#27a04b;letter-spacing:0.33px;left:804.39px;">Применяется</span>
<span class="t" style="top:690px;font-size:14.6px;color:#1d1f24;letter-spacing:0.65px;left:957.60px;">07.10.2024 / 08...</span>
<span class="t" style="top:690px;font-size:14.6px;color:#1d1f24;letter-spacing:-0.02px;left:1106.70px;">aarshavin@LCM....</span>
<span class="t" style="top:731px;font-size:14.6px;color:#1d1f24;letter-spacing:0.32px;left:399.00px;">Test_2327</span>
<span class="t" style="top:731px;font-size:14.6px;color:#1d1f24;letter-spacing:0.44px;left:549.00px;">Ark</span>
<span class="t" style="top:731px;font-size:14.6px;color:#1d1f24;letter-spacing:0.74px;left:699.00px;">22.12.3</span>
<span class="t" style="top:732px;font-size:12.5px;color:#27a04b;letter-spacing:0.33px;left:804.39px;">Применяется</span>
<span class="t" style="top:731px;font-size:14.6px;color:#1d1f24;letter-spacing:0.65px;left:957.60px;">07.10.2024 / 08...</span>
<span class="t" style="top:731px;font-size:14.6px;color:#1d1f24;letter-spacing:-0.02px;left:1106.70px;">aarshavin@LCM....</span>
<span class="t" style="top:772px;font-size:14.6px;color:#1d1f24;letter-spacing:0.38px;left:399.00px;">Test_3002</span>
<span class="t" style="top:772px;font-size:14.6px;color:#1d1f24;letter-spacing:0.44px;left:549.00px;">Ark</span>
<span class="t" style="top:772px;font-size:14.6px;color:#1d1f24;letter-spacing:0.74px;left:699.00px;">22.12.3</span>
<span class="t" style="top:773px;font-size:12.5px;color:#27a04b;letter-spacing:0.33px;left:804.39px;">Применяется</span>
<span class="t" style="top:772px;font-size:14.6px;color:#1d1f24;letter-spacing:0.65px;left:957.60px;">07.10.2024 / 08...</span>
<span class="t" style="top:772px;font-size:14.6px;color:#1d1f24;letter-spacing:-0.02px;left:1106.70px;">aarshavin@LCM....</span>
<span class="t" style="top:813px;font-size:14.6px;color:#1d1f24;letter-spacing:0.26px;left:399.00px;">Test_6271</span>
<span class="t" style="top:813px;font-size:14.6px;color:#1d1f24;letter-spacing:0.44px;left:549.00px;">Ark</span>
<span class="t" style="top:813px;font-size:14.6px;color:#1d1f24;letter-spacing:0.74px;left:699.00px;">22.12.3</span>
<span class="t" style="top:814px;font-size:12.5px;color:#e3a410;letter-spacing:0.14px;left:804.81px;">Остановлено</span>
<span class="t" style="top:813px;font-size:14.6px;color:#1d1f24;letter-spacing:0.65px;left:957.60px;">07.10.2024 / 08...</span>
<span class="t" style="top:813px;font-size:14.6px;color:#1d1f24;letter-spacing:-0.02px;left:1106.70px;">aarshavin@LCM....</span>
<span class="t" style="top:876px;font-size:15.5px;color:#1d1f24;left:910.78px;">1</span>
<span class="t" style="top:876px;font-size:15.5px;color:#1d1f24;left:951.39px;">2</span>
<span class="t b" style="top:69px;font-size:18.8px;color:#1d1f24;letter-spacing:-0.23px;transform:scaleX(0.9885);left:1567.09px;">Test_380747</span>
<span class="t b" style="top:109px;font-size:14.6px;color:#fff;letter-spacing:-0.18px;transform:scaleX(0.9989);left:1572.62px;">Применяется</span>
<span class="t" style="top:145px;font-size:14.6px;color:#80838c;letter-spacing:0.32px;left:1566.80px;">Тип</span>
<span class="t" style="top:165px;font-size:14.6px;color:#1d1f24;letter-spacing:0.21px;left:1566.80px;">Программное обеспечение</span>
<span class="t" style="top:201px;font-size:14.6px;color:#80838c;letter-spacing:0.17px;left:1566.80px;">Конфигурация</span>
<span class="t" style="top:221px;font-size:14.6px;color:#1d1f24;letter-spacing:-0.14px;left:1566.80px;">Ark1</span>
<span class="t" style="top:257px;font-size:14.6px;color:#80838c;letter-spacing:0.16px;left:1566.80px;">Версия конфигурации</span>
<span class="t" style="top:277px;font-size:14.6px;color:#1d1f24;letter-spacing:-0.15px;left:1566.80px;">22.12.3.xx</span>
<span class="t" style="top:313px;font-size:14.6px;color:#80838c;letter-spacing:0.09px;left:1566.80px;">Расписание</span>
<span class="t" style="top:333px;font-size:14.6px;color:#1d1f24;letter-spacing:0.16px;left:1566.80px;">Стандартное</span>
<span class="t" style="top:369px;font-size:14.6px;color:#80838c;letter-spacing:0.16px;left:1566.80px;">Дата создания</span>
<span class="t" style="top:389px;font-size:14.6px;color:#1d1f24;letter-spacing:-0.18px;transform:scaleX(0.9700);left:1566.80px;">27.11.2024 / 11:15:52</span>
<span class="t" style="top:425px;font-size:14.6px;color:#80838c;letter-spacing:0.15px;left:1566.80px;">Дата последнего изменения</span>
<span class="t" style="top:445px;font-size:14.6px;color:#1d1f24;letter-spacing:-0.18px;transform:scaleX(0.9700);left:1566.80px;">27.11.2024 / 11:15:52</span>
<span class="t" style="top:481px;font-size:14.6px;color:#80838c;letter-spacing:0.4px;left:1566.80px;">Автор</span>
<span class="t" style="top:501px;font-size:14.6px;color:#1d1f24;letter-spacing:-0.18px;transform:scaleX(0.9778);left:1566.80px;">aarshavin@LCM.TERRA.INNO.TECH</span>
<span class="t b" style="top:545px;font-size:14.6px;color:#1d1f24;letter-spacing:-0.18px;transform:scaleX(0.9392);left:1566.38px;">Результат</span>
<span class="t" style="top:594px;font-size:14.6px;color:#23a04a;letter-spacing:0.08px;left:1592.11px;">Успешное применение. Процент</span>
<span class="t" style="top:614px;font-size:14.6px;color:#23a04a;letter-spacing:0.2px;left:1591.89px;">ошибок не превышает допустимое</span>
<span class="t" style="top:634px;font-size:14.6px;color:#23a04a;letter-spacing:0.03px;left:1592.15px;">значение — 30%.</span>
<span class="t" style="top:674px;font-size:14.6px;color:#4f525a;letter-spacing:-0.04px;left:1594.21px;">Установлено</span>
<span class="t" style="top:674px;font-size:14.6px;color:#1d1f24;left:1815.75px;">0</span>
<span class="t" style="top:675px;font-size:12.5px;color:#6f727a;letter-spacing:0.27px;left:1838.41px;">0%</span>
<span class="t" style="top:700px;font-size:14.6px;color:#4f525a;letter-spacing:0.2px;left:1593.42px;">Планируется</span>
<span class="t" style="top:700px;font-size:14.6px;color:#1d1f24;left:1815.75px;">0</span>
<span class="t" style="top:701px;font-size:12.5px;color:#6f727a;letter-spacing:0.27px;left:1838.41px;">0%</span>
<span class="t" style="top:726px;font-size:14.6px;color:#4f525a;letter-spacing:0.34px;left:1593.91px;">Ожидает установки</span>
<span class="t" style="top:726px;font-size:14.6px;color:#1d1f24;letter-spacing:1.14px;left:1806.49px;">10</span>
<span class="t" style="top:727px;font-size:12.5px;color:#6f727a;letter-spacing:0.34px;left:1830.85px;">100%</span>
<span class="t" style="top:752px;font-size:14.6px;color:#4f525a;left:1593.91px;">Ошибка</span>
<span class="t" style="top:752px;font-size:14.6px;color:#1d1f24;left:1815.75px;">0</span>
<span class="t" style="top:753px;font-size:12.5px;color:#6f727a;letter-spacing:0.27px;left:1838.41px;">0%</span>
<span class="t" style="top:797px;font-size:14.6px;color:#4f525a;letter-spacing:0.38px;left:1593.40px;">Всего устройств</span>
<span class="t" style="top:797px;font-size:14.6px;color:#1d1f24;letter-spacing:1.14px;left:1850.49px;">10</span>
</body></html>
